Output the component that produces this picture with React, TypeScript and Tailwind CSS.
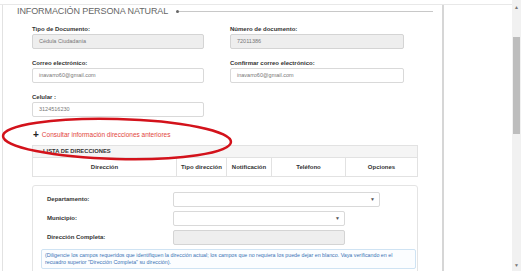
import React from 'react';

const Label: React.FC<{ children: React.ReactNode }> = ({ children }) => (
  <div className="h-[9px] leading-[9px] text-[6px] font-bold text-[#333]">{children}</div>
);

const Field: React.FC<{ value: string; disabled?: boolean; w: string }> = ({ value, disabled, w }) => (
  <div
    className={`${w} h-[15px] rounded-[2px] border pl-[6px] flex items-center text-[5.5px] text-[#777] ${
      disabled ? 'bg-[#eeeeee] border-[#d4d4d4]' : 'bg-white border-[#d9d9d9]'
    }`}
  >
    {value}
  </div>
);

const Select: React.FC<{ w: string }> = ({ w }) => (
  <div className={`${w} h-[15px] rounded-[2px] border border-[#d9d9d9] bg-white flex items-center justify-end pr-[4px]`}>
    <span className="text-[5px] text-[#555]">▼</span>
  </div>
);

export default function App() {
  return (
    <div className="relative w-[521px] h-[271px] overflow-hidden bg-white flex font-['Liberation_Sans',Arial,sans-serif]">
      <div className="w-[512px] pt-[4px]">
        <div className="h-full border-t border-[#e8e8e8] flex">
          <div className="ml-[2px] w-[442px] border-l border-[#e2e2e2] border-r-2 border-r-[#d6d6d6]">
            {/* header */}
            <div className="h-[13px] flex items-center pl-[14px] pr-[9px]">
              <span className="text-[9px] text-[#666] tracking-[-0.1px] whitespace-nowrap">INFORMACIÓN PERSONA NATURAL</span>
              <span className="ml-[8px] w-[3px] h-[3px] rounded-full bg-[#666]" />
              <div className="flex-1 h-px bg-[#c8c8c8]" />
            </div>

            <div className="pl-[29px] pr-[10px] mt-[7px]">
              <div className="flex gap-[26px]">
                <div>
                  <Label>Tipo de Documento:</Label>
                  <Field w="w-[172px]" value="Cédula Ciudadanía" disabled />
                </div>
                <div>
                  <Label>Número de documento:</Label>
                  <Field w="w-[174px]" value="72011386" disabled />
                </div>
              </div>
              <div className="flex gap-[26px] mt-[10px]">
                <div>
                  <Label>Correo electrónico:</Label>
                  <Field w="w-[172px]" value="inavarro60@gmail.com" />
                </div>
                <div>
                  <Label>Confirmar correo electrónico:</Label>
                  <Field w="w-[174px]" value="inavarro60@gmail.com" />
                </div>
              </div>
              <div className="mt-[10px]">
                <Label>Celular :</Label>
                <Field w="w-[172px]" value="3124516230" />
              </div>

              <div className="h-[12px] mt-[12px] flex items-center gap-[3px] pl-[1px]">
                <span className="text-[10px] leading-none font-bold text-[#222]">+</span>
                <span className="text-[6.5px] text-[#e2453c]">Consultar información direcciones anteriores</span>
              </div>

              {/* lista */}
              <div className="w-[386px] mt-[4px]">
                <div className="h-[13px] bg-[#f5f5f5] border border-[#e2e2e2] flex items-center pl-[10px] text-[5.8px] font-bold text-[#333]">
                  LISTA DE DIRECCIONES
                </div>
                <div className="h-[19px] grid grid-cols-[144px_50px_45px_74px_1fr] border-x border-b border-[#e2e2e2] text-[6px] font-bold text-[#333]">
                  <div className="flex items-center justify-center border-r border-[#e2e2e2]">Dirección</div>
                  <div className="flex items-center justify-center border-r border-[#e2e2e2]">Tipo dirección</div>
                  <div className="flex items-center justify-center border-r border-[#e2e2e2]">Notificación</div>
                  <div className="flex items-center justify-center border-r border-[#e2e2e2]">Teléfono</div>
                  <div className="flex items-center justify-center">Opciones</div>
                </div>

                <div className="mt-[8px] border border-[#e4e4e4] rounded-[3px] pt-[6px] pl-[14px] pr-[1px] h-[90px]">
                  <div className="flex items-center">
                    <div className="w-[126px] text-[6px] font-bold text-[#333]">Departamento:</div>
                    <Select w="w-[207px]" />
                  </div>
                  <div className="flex items-center mt-[4px]">
                    <div className="w-[126px] text-[6px] font-bold text-[#333]">Municipio:</div>
                    <Select w="w-[172px]" />
                  </div>
                  <div className="flex items-center mt-[4px]">
                    <div className="w-[126px] text-[6px] font-bold text-[#333]">Dirección Completa:</div>
                    <div className="w-[172px] h-[15px] rounded-[2px] border border-[#d4d4d4] bg-[#eeeeee]" />
                  </div>
                  <div className="mt-[4px] ml-[-6px] border border-[#cfe3f3] rounded-[2px] bg-[#fbfdff] px-[3px] py-[2px] text-[5.3px] leading-[7px] text-[#3a73b5]">
                    (Diligencie los campos requeridos que identifiquen la dirección actual; los campos que no requiera los puede dejar en blanco. Vaya verificando en el recuadro superior "Dirección Completa" su dirección).
                  </div>
                  <div className="mt-[2px] ml-[-6px] flex gap-[4px]">
                    <div className="w-[80px] h-[6px] border-t border-[#dcdcdc]" />
                    <div className="w-[60px] h-[6px] border-t border-[#dcdcdc]" />
                    <div className="w-[60px] h-[6px] border-t border-[#dcdcdc]" />
                    <div className="w-[60px] h-[6px] border-t border-[#dcdcdc]" />
                  </div>
                </div>
              </div>
            </div>
          </div>
        </div>
      </div>

      {/* scrollbar */}
      <div className="w-[9px] h-full bg-[#f1f1f1] flex flex-col items-center">
        <span className="mt-[5px] text-[5px] leading-none text-[#777]">▲</span>
        <div className="mt-[27px] w-[7px] h-[97px] bg-[#bdbdbd]" />
        <div className="flex-1" />
        <span className="mb-[3px] text-[5px] leading-none text-[#777]">▼</span>
      </div>

      {/* red annotation */}
      <svg className="absolute left-0 top-0 pointer-events-none" width="521" height="271">
        <ellipse cx="117" cy="139" rx="114" ry="20" fill="none" stroke="#d3121b" strokeWidth="2.5" transform="rotate(1.5 117 139)" />
      </svg>
    </div>
  );
}
